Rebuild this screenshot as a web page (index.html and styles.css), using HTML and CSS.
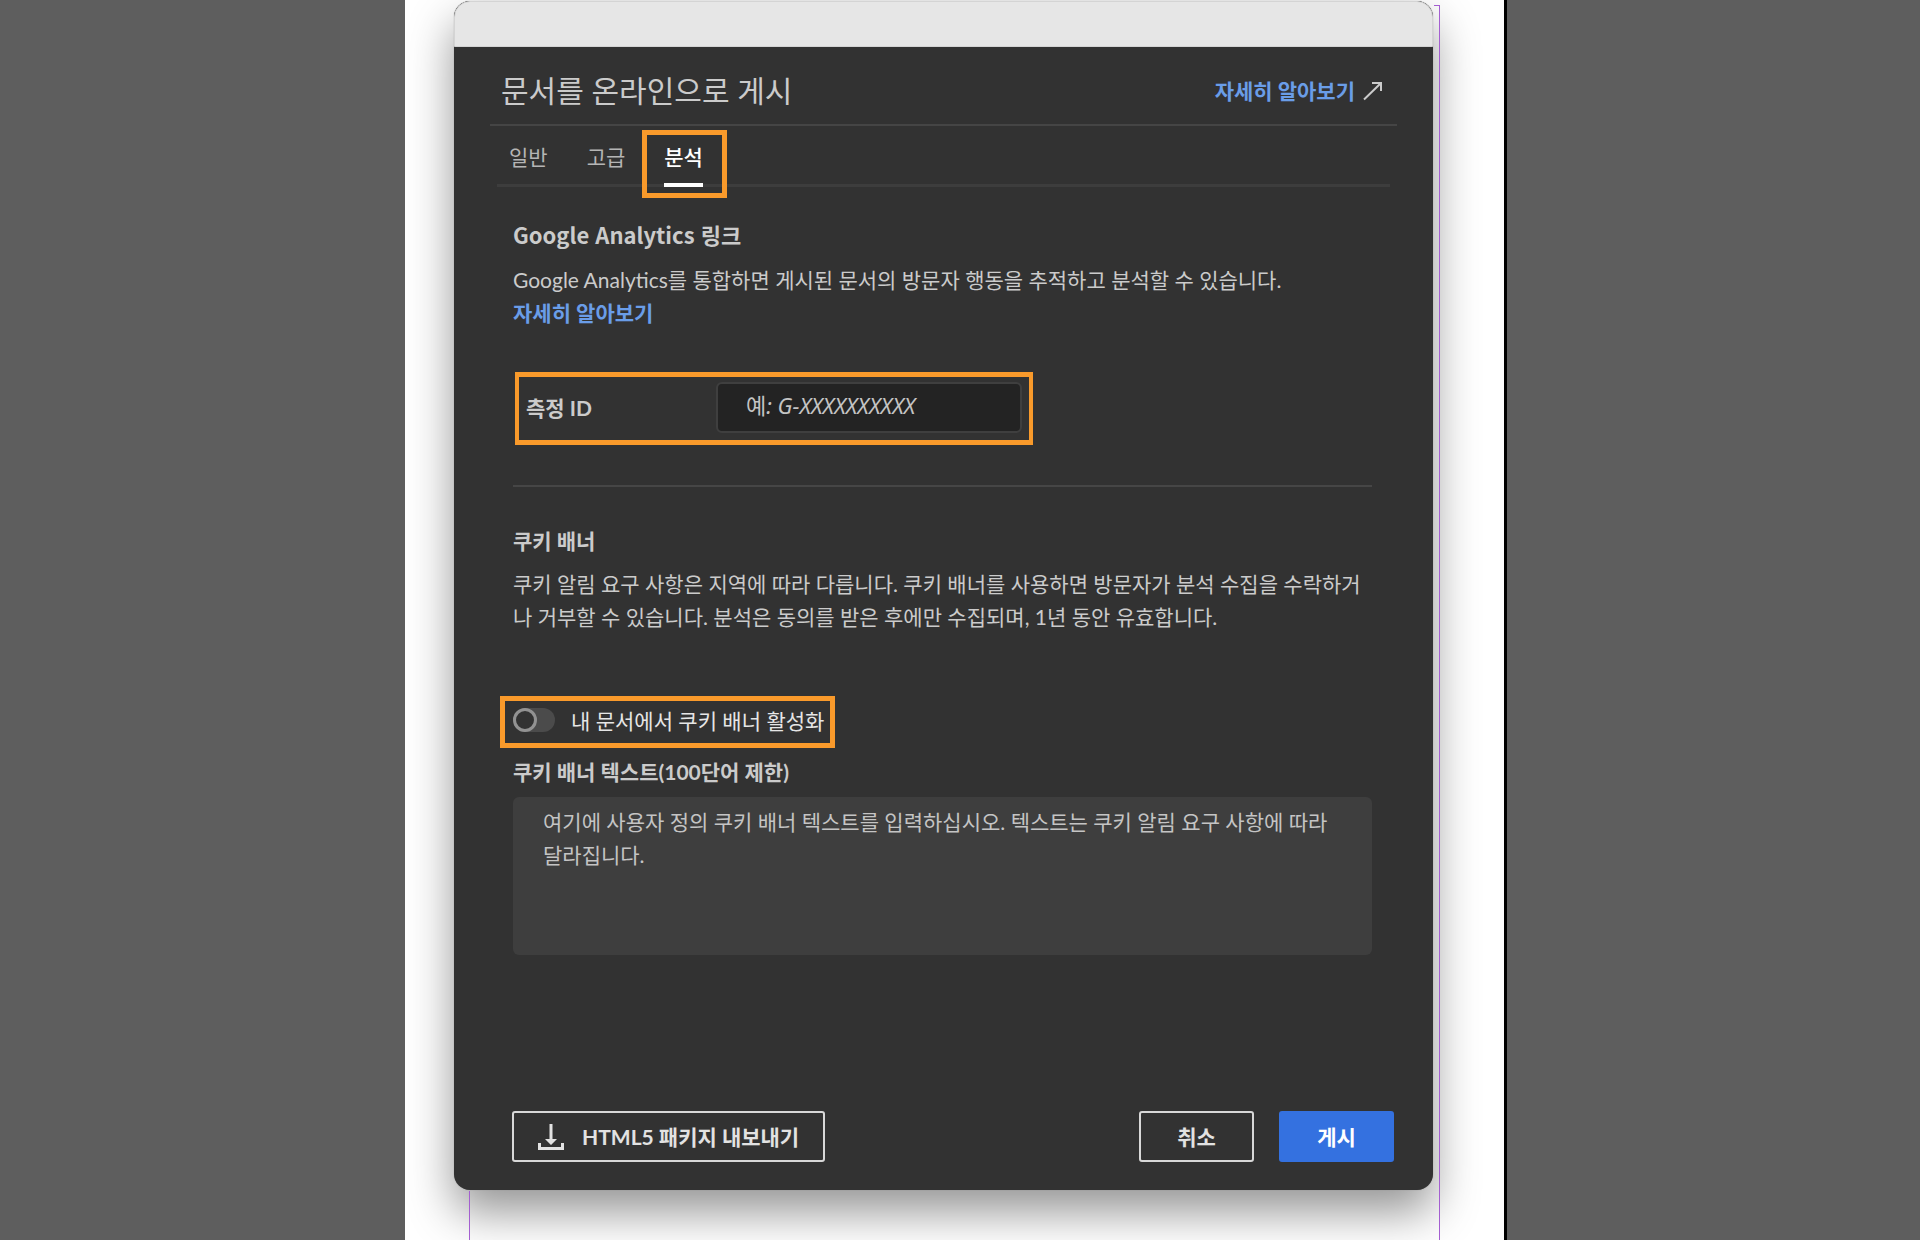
FILE: index.html
```html
<!DOCTYPE html>
<html lang="ko">
<head>
    <meta charset="UTF-8">
    <meta name="viewport" content="width=device-width, initial-scale=1.0">
    <title>문서를 온라인으로 게시</title>
    <link rel="stylesheet" href="styles.css">
</head>
<body>
    <main class="page">
        <div class="guide guide-left"></div>
        <div class="guide guide-right"></div>

        <section class="dialog" role="dialog" aria-labelledby="dialogTitle">
            <div class="titlebar"></div>

            <header class="dialog-header">
                <h1 id="dialogTitle">문서를 온라인으로 게시</h1>
                <a href="#" class="link help-link">자세히 알아보기
                    <svg class="arrow-icon" viewBox="0 0 20 20" aria-hidden="true">
                        <path d="M1 18.5 L18 2 M9 2 H18 V10" />
                    </svg>
                </a>
            </header>

            <nav class="tabs">
                <button type="button" class="tab">일반</button>
                <button type="button" class="tab">고급</button>
                <button type="button" class="tab active">분석</button>
            </nav>

            <form class="content">
                <h2>Google Analytics 링크</h2>
                <p class="intro">Google Analytics를 통합하면 게시된 문서의 방문자 행동을 추적하고 분석할 수 있습니다.<br>
                    <a href="#" class="link">자세히 알아보기</a></p>

                <div class="measure-row">
                    <label for="measureId">측정 ID</label>
                    <input type="text" id="measureId" placeholder="예: G-XXXXXXXXXX">
                </div>

                <hr>

                <h3>쿠키 배너</h3>
                <p class="cookie-info">쿠키 알림 요구 사항은 지역에 따라 다릅니다. 쿠키 배너를 사용하면 방문자가 분석 수집을 수락하거나 거부할 수 있습니다. 분석은 동의를 받은 후에만 수집되며, 1년 동안 유효합니다.</p>

                <div class="toggle-row">
                    <input type="checkbox" id="cookieToggle" class="toggle">
                    <label for="cookieToggle">내 문서에서 쿠키 배너 활성화</label>
                </div>

                <label for="cookieText" class="text-label">쿠키 배너 텍스트(100단어 제한)</label>
                <textarea id="cookieText" placeholder="여기에 사용자 정의 쿠키 배너 텍스트를 입력하십시오. 텍스트는 쿠키 알림 요구 사항에 따라 달라집니다."></textarea>
            </form>

            <footer class="dialog-footer">
                <button type="button" class="btn btn-export">
                    <svg class="download-icon" viewBox="0 0 26 26" aria-hidden="true">
                        <path d="M11.5 0 H14.5 V15 H19 L13 21 L7 15 H11.5 Z" />
                        <path d="M0 19 H3 V23 H23 V19 H26 V26 H0 Z" />
                    </svg>
                    HTML5 패키지 내보내기
                </button>
                <button type="button" class="btn btn-cancel">취소</button>
                <button type="button" class="btn btn-publish">게시</button>
            </footer>
        </section>
    </main>
</body>
</html>
```

FILE: styles.css
```css
* {
    box-sizing: border-box;
}

body {
    margin: 0;
    display: grid;
    grid-template-columns: 405fr minmax(0, 1102px) 413fr;
    min-height: 100vh;
    background-color: #5e5e5e;
    color: #cbcbcb;
    font-family: Lato, "Noto Sans CJK KR", sans-serif;
    font-size: 21px;
    line-height: 33px;
}

.page {
    grid-column: 2;
    position: relative;
    overflow: hidden;
    padding: 1px 71px 49px 49px;
    background-color: #fff;
    border-right: 3px solid #000;
}

/* margin guides of the document around the dialog */
.guide {
    position: absolute;
    top: 5px;
    bottom: 0;
    width: 6px;
}

.guide-left {
    top: 1191px;
    left: 64px;
    z-index: 1;
    border-left: 1px solid #a45fd0;
}

.guide-right {
    right: 64px;
    z-index: 1;
    border-top: 1px solid #a45fd0;
    border-right: 1px solid #a45fd0;
}

.dialog {
    position: relative;
    border-radius: 16px;
    background-color: #323232;
    box-shadow: 0 0 1px #888, 0 22px 46px rgba(0, 0, 0, 0.42);
}

.titlebar {
    height: 46px;
    border-radius: 16px 16px 0 0;
    background-color: #e6e6e6;
    border: 1px solid #d4d4d4;
}

.dialog-header {
    display: flex;
    align-items: center;
    justify-content: space-between;
    height: 79px;
    margin: 0 36px;
    padding: 10px 14px 0 11px;
    border-bottom: 2px solid #454545;
}

h1 {
    margin: 0;
    font-size: 30px;
    font-weight: 400;
}

.link {
    color: #6a9de8;
    font-weight: 700;
    text-decoration: none;
}

.help-link {
    display: flex;
    align-items: center;
    gap: 8px;
}

.arrow-icon {
    width: 20px;
    height: 20px;
    fill: none;
    stroke: #cbcbcb;
    stroke-width: 2;
}

.tabs {
    display: flex;
    gap: 39px;
    height: 61px;
    margin: 0 43px;
    padding: 0 12px;
    border-bottom: 3px solid #3d3d3d;
}

.tab {
    position: relative;
    margin: 0 0 -3px;
    padding: 4px 0 0;
    border: none;
    border-bottom: 4px solid transparent;
    background: none;
    color: #b5b5b5;
    font: inherit;
    cursor: pointer;
}

.tab.active {
    border-bottom-color: #fff;
    color: #fff;
    font-weight: 500;
}

.tab.active::after {
    content: "";
    position: absolute;
    top: 4px;
    right: -24px;
    bottom: -15px;
    left: -22px;
    border: 5px solid #f99a2b;
}

.content {
    padding: 31px 61px 0 59px;
}

h2, h3, p {
    margin: 0;
}

h2 {
    font-family: "Noto Sans CJK KR", sans-serif;
    font-size: 22px;
}

h3 {
    font-size: 21px;
}

.intro {
    margin-top: 12px;
}

.measure-row {
    display: flex;
    align-items: center;
    justify-content: space-between;
    width: 518px;
    max-width: 100%;
    height: 73px;
    margin: 43px 0 40px 2px;
    padding: 0 7px 2px;
    border: 5px solid #f99a2b;
    border-width: 5px 4px;
}

.measure-row label,
.text-label {
    font-weight: 700;
}

.measure-row input {
    width: 306px;
    height: 51px;
    padding: 0 28px 5px;
    border: 2px solid #3f3f3f;
    border-radius: 6px;
    background-color: #232323;
    color: #cbcbcb;
    font-family: "Noto Sans", "Noto Sans CJK KR", sans-serif;
    font-size: 22px;
    font-style: italic;
    font-synthesis: none;
}

input::placeholder,
textarea::placeholder {
    color: #c4c4c4;
    opacity: 1;
}

hr {
    height: 2px;
    margin: 0 0 37px;
    border: none;
    background-color: #464646;
}

.cookie-info {
    margin-top: 10px;
    padding-right: 10px;
}

.toggle-row {
    display: flex;
    align-items: center;
    gap: 16px;
    width: fit-content;
    height: 52px;
    margin: 63px 0 7px -13px;
    padding: 0 6px 4px 8px;
    border: 5px solid #f99a2b;
    color: #e6e6e6;
}

.toggle {
    appearance: none;
    width: 42px;
    height: 24px;
    margin: 0;
    border-radius: 12px;
    background-color: #4b4b4b;
    cursor: pointer;
}

.toggle::before {
    content: "";
    display: block;
    width: 24px;
    height: 24px;
    box-sizing: border-box;
    border: 3px solid #929292;
    border-radius: 50%;
    background-color: #323232;
}

.toggle:checked::before {
    margin-left: 18px;
}

.text-label {
    display: block;
}

textarea {
    display: block;
    width: 100%;
    height: 158px;
    margin-top: 9px;
    padding: 8px 30px;
    border: none;
    border-radius: 6px;
    background-color: #3e3e3e;
    color: #cbcbcb;
    font: inherit;
    resize: none;
}

.dialog-footer {
    display: flex;
    gap: 25px;
    margin-top: 156px;
    padding: 0 39px 28px 58px;
}

.btn {
    display: flex;
    align-items: center;
    justify-content: center;
    height: 51px;
    min-width: 115px;
    padding: 0 24px;
    border: 2px solid #d8d8d8;
    border-radius: 3px;
    background: none;
    color: #e2e2e2;
    font: inherit;
    font-weight: 700;
    cursor: pointer;
}

.btn-export {
    gap: 18px;
    margin-right: auto;
}

.btn-publish {
    border-color: #3471e0;
    background-color: #3471e0;
    color: #fff;
}

.download-icon {
    width: 26px;
    height: 26px;
    fill: #e2e2e2;
}
```
